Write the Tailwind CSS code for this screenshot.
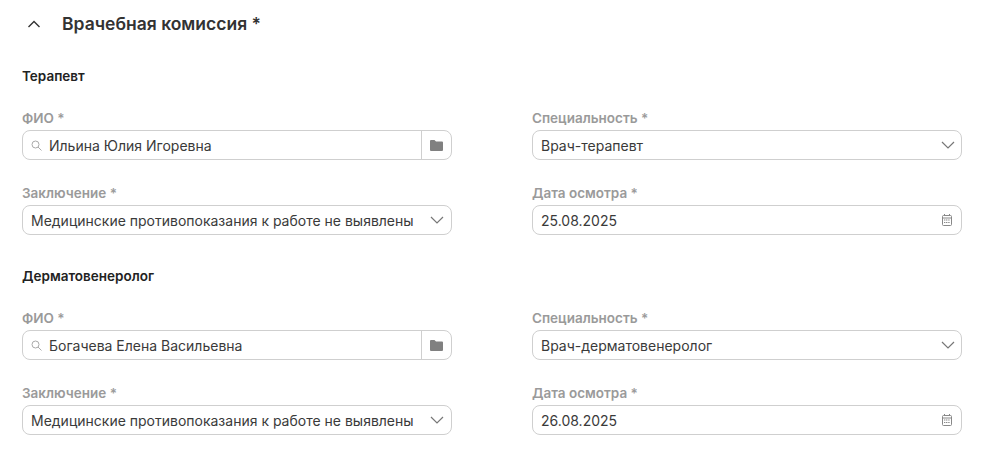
<!DOCTYPE html>
<html lang="ru">
<head>
    <meta charset="UTF-8">
    <title>Врачебная комиссия</title>
    <script src="https://cdn.jsdelivr.net/npm/@tailwindcss/browser@4"></script>
</head>
<body class="bg-white font-['Inter',sans-serif] text-[#2e2e2e] w-[1008px] h-[450px] overflow-hidden">
    <div class="pl-[22px] w-[962px] box-content">
        <!-- Section header -->
        <div class="flex items-center h-[24px] mt-[12px]">
            <svg class="ml-[5px] w-[14px] h-[14px]" viewBox="0 0 14 14" fill="none" stroke="#333" stroke-width="1.4"><path d="M1.5 10 7 4.5 12.5 10"/></svg>
            <h2 class="ml-[21px] text-[17.5px] leading-[24px] font-semibold text-[#333]">Врачебная комиссия *</h2>
        </div>

        <!-- Терапевт -->
        <h3 class="mt-[31px] text-[13.5px] leading-[18px] font-semibold text-[#222]">Терапевт</h3>
        <div class="mt-[24px] grid grid-cols-[430px_430px] gap-x-[80px] gap-y-[24px]">
            <div>
                <label class="block text-[13.5px] leading-[18px] mb-[3px] font-semibold text-[#9a9a9a]">ФИО *</label>
                <div class="flex h-[30px] border border-[#cfcfcf] rounded-[8px]">
                    <div class="flex flex-1 items-center pl-[8px] border-r border-[#cfcfcf]">
                        <svg class="w-[11px] h-[11px]" viewBox="0 0 11 11" fill="none" stroke="#aaa"><circle cx="4.5" cy="4.5" r="3.5"/><path d="m7 7 3.5 3.5"/></svg>
                        <span class="ml-[7px] text-[14px] text-[#3a3a3a]">Ильина Юлия Игоревна</span>
                    </div>
                    <div class="w-[29px] flex items-center justify-center">
                        <svg class="w-[13px] h-[11px]" viewBox="0 0 13 11" fill="#808080"><path d="M0 1a1 1 0 0 1 1-1h3.5l1.5 1.5h6a1 1 0 0 1 1 1V10a1 1 0 0 1-1 1H1a1 1 0 0 1-1-1z"/></svg>
                    </div>
                </div>
            </div>
            <div>
                <label class="block text-[13.5px] leading-[18px] mb-[3px] font-semibold text-[#9a9a9a]">Специальность *</label>
                <div class="flex items-center justify-between h-[30px] border border-[#cfcfcf] rounded-[8px] pl-[8px] pr-[6px]">
                    <span class="text-[14px] text-[#3a3a3a]">Врач-терапевт</span>
                    <svg class="w-[14px] h-[8px]" viewBox="0 0 14 8" fill="none" stroke="#777" stroke-width="1.2"><path d="m1 1 6 6 6-6"/></svg>
                </div>
            </div>
            <div>
                <label class="block text-[13.5px] leading-[18px] mb-[3px] font-semibold text-[#9a9a9a]">Заключение *</label>
                <div class="flex items-center justify-between h-[30px] border border-[#cfcfcf] rounded-[8px] pl-[8px] pr-[7px]">
                    <span class="text-[14px] text-[#3a3a3a]">Медицинские противопоказания к работе не выявлены</span>
                    <svg class="w-[14px] h-[8px]" viewBox="0 0 14 8" fill="none" stroke="#777" stroke-width="1.2"><path d="m1 1 6 6 6-6"/></svg>
                </div>
            </div>
            <div>
                <label class="block text-[13.5px] leading-[18px] mb-[3px] font-semibold text-[#9a9a9a]">Дата осмотра *</label>
                <div class="flex items-center justify-between h-[30px] border border-[#cfcfcf] rounded-[8px] pl-[8px] pr-[9px]">
                    <span class="text-[14px] text-[#3a3a3a]">25.08.2025</span>
                    <svg class="w-[10px] h-[12px]" viewBox="0 0 10 12" fill="none" stroke="#888"><rect x=".5" y="1.5" width="9" height="10" rx="1"/><path d="M.5 4h9M2.5 0v2M7.5 0v2"/><path d="M2 6h6M2 8.5h6" stroke-dasharray="1.2 .6"/></svg>
                </div>
            </div>
        </div>

        <!-- Дерматовенеролог -->
        <h3 class="mt-[32px] text-[13.5px] leading-[18px] font-semibold text-[#222]">Дерматовенеролог</h3>
        <div class="mt-[24px] grid grid-cols-[430px_430px] gap-x-[80px] gap-y-[24px]">
            <div>
                <label class="block text-[13.5px] leading-[18px] mb-[3px] font-semibold text-[#9a9a9a]">ФИО *</label>
                <div class="flex h-[30px] border border-[#cfcfcf] rounded-[8px]">
                    <div class="flex flex-1 items-center pl-[8px] border-r border-[#cfcfcf]">
                        <svg class="w-[11px] h-[11px]" viewBox="0 0 11 11" fill="none" stroke="#aaa"><circle cx="4.5" cy="4.5" r="3.5"/><path d="m7 7 3.5 3.5"/></svg>
                        <span class="ml-[7px] text-[14px] text-[#3a3a3a]">Богачева Елена Васильевна</span>
                    </div>
                    <div class="w-[29px] flex items-center justify-center">
                        <svg class="w-[13px] h-[11px]" viewBox="0 0 13 11" fill="#808080"><path d="M0 1a1 1 0 0 1 1-1h3.5l1.5 1.5h6a1 1 0 0 1 1 1V10a1 1 0 0 1-1 1H1a1 1 0 0 1-1-1z"/></svg>
                    </div>
                </div>
            </div>
            <div>
                <label class="block text-[13.5px] leading-[18px] mb-[3px] font-semibold text-[#9a9a9a]">Специальность *</label>
                <div class="flex items-center justify-between h-[30px] border border-[#cfcfcf] rounded-[8px] pl-[8px] pr-[6px]">
                    <span class="text-[14px] text-[#3a3a3a]">Врач-дерматовенеролог</span>
                    <svg class="w-[14px] h-[8px]" viewBox="0 0 14 8" fill="none" stroke="#777" stroke-width="1.2"><path d="m1 1 6 6 6-6"/></svg>
                </div>
            </div>
            <div>
                <label class="block text-[13.5px] leading-[18px] mb-[3px] font-semibold text-[#9a9a9a]">Заключение *</label>
                <div class="flex items-center justify-between h-[30px] border border-[#cfcfcf] rounded-[8px] pl-[8px] pr-[7px]">
                    <span class="text-[14px] text-[#3a3a3a]">Медицинские противопоказания к работе не выявлены</span>
                    <svg class="w-[14px] h-[8px]" viewBox="0 0 14 8" fill="none" stroke="#777" stroke-width="1.2"><path d="m1 1 6 6 6-6"/></svg>
                </div>
            </div>
            <div>
                <label class="block text-[13.5px] leading-[18px] mb-[3px] font-semibold text-[#9a9a9a]">Дата осмотра *</label>
                <div class="flex items-center justify-between h-[30px] border border-[#cfcfcf] rounded-[8px] pl-[8px] pr-[9px]">
                    <span class="text-[14px] text-[#3a3a3a]">26.08.2025</span>
                    <svg class="w-[10px] h-[12px]" viewBox="0 0 10 12" fill="none" stroke="#888"><rect x=".5" y="1.5" width="9" height="10" rx="1"/><path d="M.5 4h9M2.5 0v2M7.5 0v2"/><path d="M2 6h6M2 8.5h6" stroke-dasharray="1.2 .6"/></svg>
                </div>
            </div>
        </div>
    </div>
</body>
</html>
